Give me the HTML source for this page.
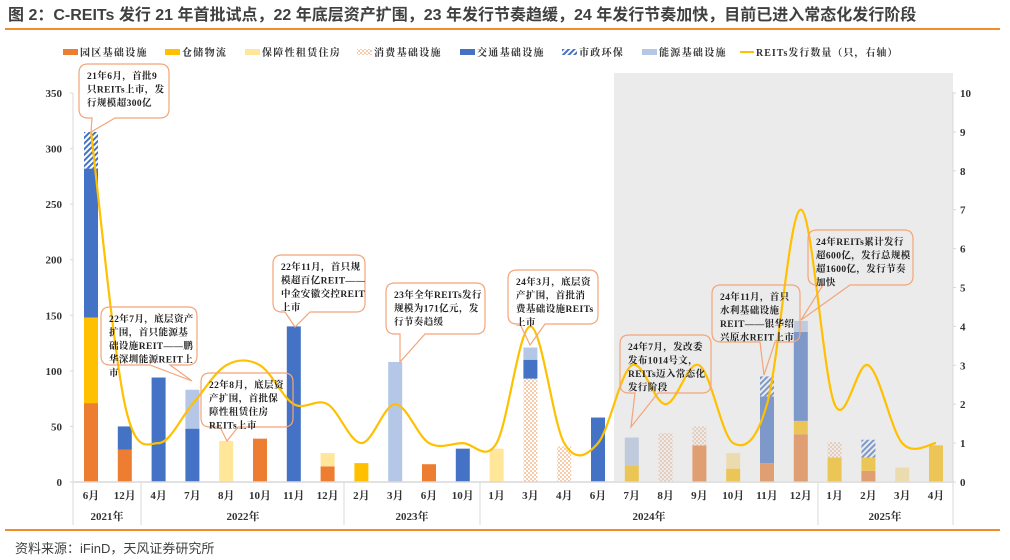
<!DOCTYPE html>
<html><head><meta charset="utf-8"><style>
html,body{margin:0;padding:0;background:#fff;width:1010px;height:560px;overflow:hidden}
svg text{font-family:"Liberation Serif","Noto Serif CJK SC",serif}
</style></head><body>
<svg id="s" width="1010" height="560" xmlns="http://www.w3.org/2000/svg">
<defs>
<pattern id="hatch" width="4" height="4" patternUnits="userSpaceOnUse" patternTransform="rotate(45)">
<rect width="4" height="4" fill="#fff"/><rect width="2" height="4" fill="#4472C4"/></pattern>
<pattern id="check" width="4" height="4" patternUnits="userSpaceOnUse">
<rect width="4" height="4" fill="#fff"/><rect width="2" height="2" fill="#F8CBAD"/><rect x="2" y="2" width="2" height="2" fill="#F8CBAD"/></pattern>
</defs>
<text x="8" y="20" font-size="16" font-weight="bold" fill="#404040" style="font-family:'Liberation Sans','Noto Sans CJK SC',sans-serif">图 2：C-REITs 发行 21 年首批试点，22 年底层资产扩围，23 年发行节奏趋缓，24 年发行节奏加快，目前已进入常态化发行阶段</text>
<rect x="5" y="28" width="995" height="2" fill="#F28C28"/>
<rect x="5" y="529" width="995" height="2" fill="#F28C28"/>
<text x="15" y="553" font-size="13" fill="#404040" style="font-family:'Liberation Sans','Noto Sans CJK SC',sans-serif">资料来源：iFinD，天风证券研究所</text>
<g id="g"></g>
</svg>
<script>
const g=document.getElementById('g');let h='';
const Y=v=>482-v*1.1114, R=v=>482-v*38.9;
const leg=[[63,'#ED7D31','园区基础设施'],[165,'#FFC000','仓储物流'],[245,'#FFE699','保障性租赁住房'],[357,'url(#check)','消费基础设施'],[460,'#4472C4','交通基础设施'],[562,'url(#hatch)','市政环保'],[642,'#B4C7E7','能源基础设施']];
leg.forEach(l=>{h+=`<rect x="${l[0]}" y="49" width="15" height="6" fill="${l[1]}"/><text x="${l[0]+17}" y="56" font-size="10" font-weight="bold" fill="#333" letter-spacing="1.3">${l[2]}</text>`});
h+=`<rect x="740" y="51" width="14" height="2" fill="#FFC000"/><text x="756" y="56" font-size="10" font-weight="bold" fill="#333" letter-spacing="1">REITs发行数量（只，右轴）</text>`;
for(let i=0;i<=7;i++){const y=Y(i*50);h+=`<text x="62" y="${y+4}" font-size="11" font-weight="bold" text-anchor="end" fill="#333">${i*50}</text><line x1="70" y1="${y}" x2="73" y2="${y}" stroke="#d9d9d9"/>`}
for(let i=0;i<=10;i++){const y=R(i);h+=`<text x="960" y="${y+4}" font-size="11" font-weight="bold" fill="#333">${i}</text><line x1="953" y1="${y}" x2="956" y2="${y}" stroke="#d9d9d9"/>`}
h+=`<line x1="73" y1="93" x2="73" y2="482" stroke="#d9d9d9"/><line x1="953" y1="92" x2="953" y2="482" stroke="#d9d9d9"/>`;
const C='#ED7D31',Yl='#FFC000',LY='#FFE699',K='url(#check)',B='#4472C4',H='url(#hatch)',LB='#B4C7E7';
const data=[
['6月',[[C,71],[Yl,77],[B,134],[H,33]]],['12月',[[C,29],[B,21]]],
['4月',[[B,94]]],['7月',[[B,48],[LB,35]]],['8月',[[LY,37]]],['10月',[[C,39]]],['11月',[[B,140]]],['12月',[[C,14],[LY,12]]],
['2月',[[Yl,17]]],['3月',[[LB,108]]],['6月',[[C,16]]],['10月',[[B,30]]],
['1月',[[LY,30]]],['3月',[[K,93],[B,17],[LB,11]]],['4月',[[K,32]]],['6月',[[B,58]]],['7月',[[Yl,15],[LB,25]]],['8月',[[K,44]]],['9月',[[C,33],[K,17]]],['10月',[[Yl,12],[LY,14]]],['11月',[[C,17],[B,60],[H,18]]],['12月',[[C,43],[Yl,12],[B,80],[LB,10]]],
['1月',[[Yl,22],[K,14]]],['2月',[[C,10],[Yl,12],[H,16]]],['3月',[[LY,13]]],['4月',[[Yl,33]]]];
const X=i=>91+i*33.8;
data.forEach((d,i)=>{let v=0;d[1].forEach(s=>{h+=`<rect x="${X(i)-7}" y="${Y(v+s[1])}" width="14" height="${s[1]*1.1114}" fill="${s[0]}"/>`;v+=s[1]});
h+=`<text x="${X(i)}" y="499" font-size="11" font-weight="bold" text-anchor="middle" fill="#333">${d[0]}</text>`});
h+=`<rect x="614" y="73" width="339" height="408" fill="#d0d0d0" fill-opacity="0.42"/>`;
h+=`<line x1="73" y1="482" x2="953" y2="482" stroke="#d9d9d9" stroke-width="1.5"/>`;
[73,141,344,480,818,953].forEach(x=>h+=`<line x1="${x}" y1="482" x2="${x}" y2="525" stroke="#d9d9d9"/>`);
[[107,'2021年'],[243,'2022年'],[412,'2023年'],[649,'2024年'],[885,'2025年']].forEach(t=>h+=`<text x="${t[0]}" y="520" font-size="11" font-weight="bold" text-anchor="middle" fill="#333">${t[1]}</text>`);
const cnt=[9,2,1,2,3,3,2,2,1,2,1,1,1,4,1,1,3,2,3,1,2,7,2,3,1,1];
const P=cnt.map((c,i)=>[X(i),R(c)]);
let d=`M${P[0][0]},${P[0][1]}`;
for(let i=0;i<P.length-1;i++){const p0=P[Math.max(0,i-1)],p1=P[i],p2=P[i+1],p3=P[Math.min(P.length-1,i+2)];const t=6;
d+=` C${p1[0]+(p2[0]-p0[0])/t},${p1[1]+(p2[1]-p0[1])/t} ${p2[0]-(p3[0]-p1[0])/t},${p2[1]-(p3[1]-p1[1])/t} ${p2[0]},${p2[1]}`}
h+=`<path d="${d}" fill="none" stroke="#FFC000" stroke-width="2.2"/>`;
function call(x,y,w,hh,a,b,tx,ty,lines){const r=9,bt=y+hh;
h+=`<path d="M${x+r},${y} H${x+w-r} Q${x+w},${y} ${x+w},${y+r} V${bt-r} Q${x+w},${bt} ${x+w-r},${bt} H${b} L${tx},${ty} L${a},${bt} H${x+r} Q${x},${bt} ${x},${bt-r} V${y+r} Q${x},${y} ${x+r},${y} Z" fill="none" stroke="#F4A57A" stroke-width="1.2"/>`;
lines.forEach((l,i)=>h+=`<text x="${x+8}" y="${y+15+i*13.5}" font-size="9.5" font-weight="bold" fill="#222" letter-spacing="0.4">${l}</text>`)}
call(79,64,90,54,92,115,91,132,['21年6月，首批9','只REITs上市，发','行规模超300亿']);
call(101,307,96,58,150,170,192,381,['22年7月，底层资产','扩围，首只能源基','础设施REIT——鹏','华深圳能源REIT上','市']);
call(201,373,92,54,220,238,227,441,['22年8月，底层资','产扩围，首批保','障性租赁住房','REITs上市']);
call(273,255,92,57,285,310,295,327,['22年11月，首只规','模超百亿REIT——','中金安徽交控REIT','上市']);
call(386,283,99,51,400,425,400,362,['23年全年REITs发行','规模为171亿元，发','行节奏趋缓']);
call(508,270,90,54,520,545,530,345,['24年3月，底层资','产扩围，首批消','费基础设施REITs','上市']);
call(620,335,91,58,635,658,631,427,['24年7月，发改委','发布1014号文，','REITs迈入常态化','发行阶段']);
call(712,285,88,57,760,775,764,375,['24年11月，首只','水利基础设施','REIT——银华绍','兴原水REIT上市']);
call(808,230,105,55,823,850,801,320,['24年REITs累计发行','超600亿，发行总规模','超1600亿，发行节奏','加快']);
g.innerHTML=h;
</script>
</body></html>
